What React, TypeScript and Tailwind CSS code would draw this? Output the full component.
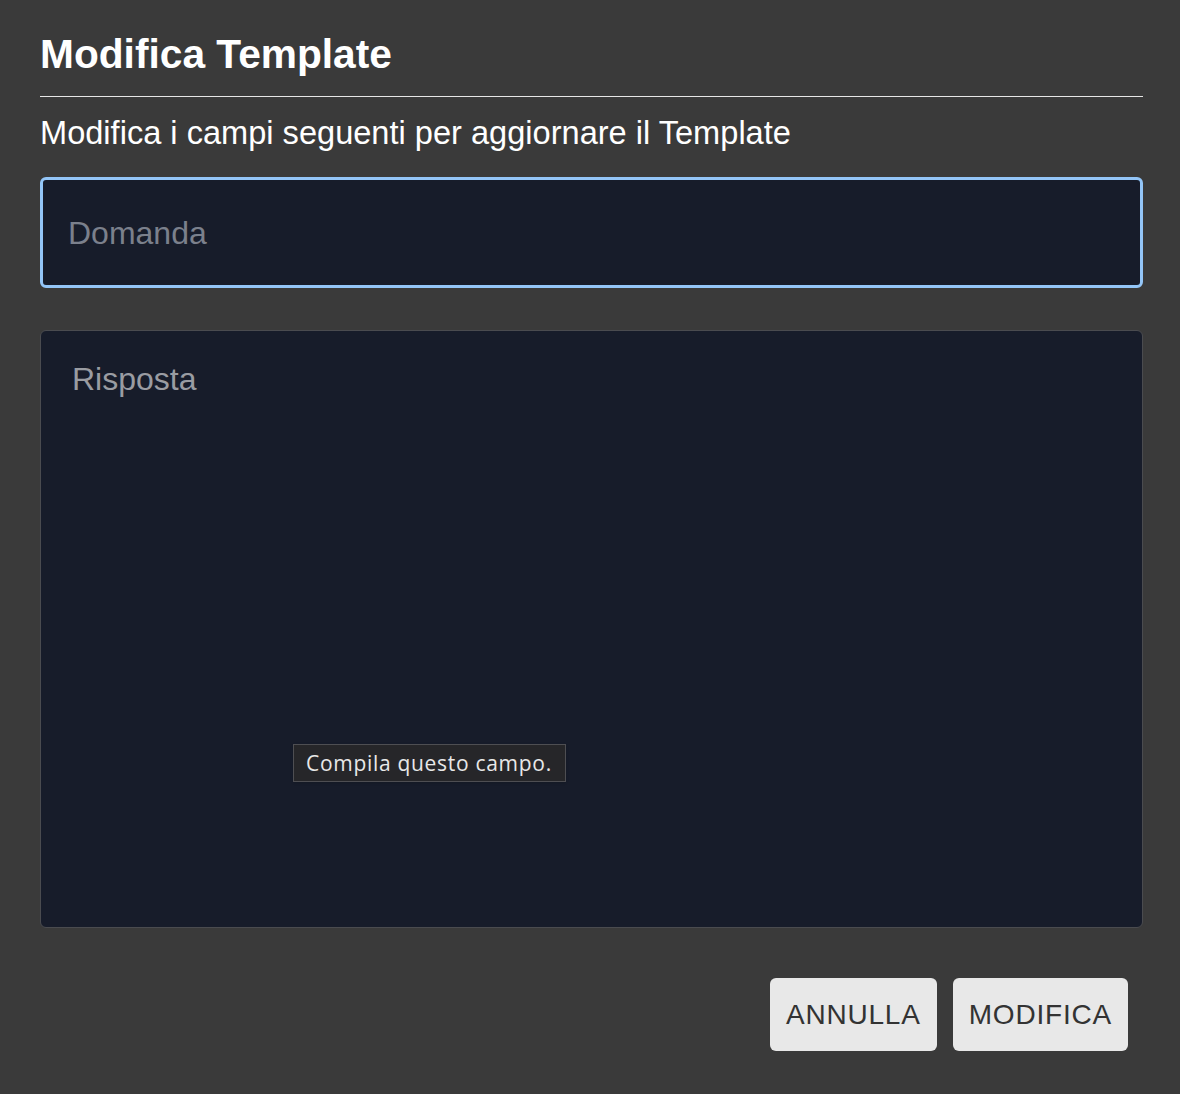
export default function App() {
  const font = { fontFamily: '"Liberation Sans", Arial, sans-serif' };
  return (
    <div className="min-h-[1094px] w-full bg-[#3a3a3a] pl-10 pr-[37px] pt-[30px]" style={font}>
      <h1 className="text-[40.7px] font-bold leading-[48px] text-white">Modifica Template</h1>
      <div className="mt-[18px] h-px w-full bg-[#e6e6e6]" />
      <p className="mt-[16px] text-[32.6px] leading-[40px] text-white">
        Modifica i campi seguenti per aggiornare il Template
      </p>
      <div className="mt-[24px] flex h-[111px] items-center rounded-[6px] border-[3px] border-[#93c5f7] bg-[#171c2a] pl-[25px]">
        <span className="text-[32px] text-[#7b808c]">Domanda</span>
      </div>
      <div className="relative mt-[42px] h-[598px] rounded-[6px] border border-[#4a4b4f] bg-[#171c2a] pl-[31px] pt-[28px]">
        <div className="text-[32px] leading-[40px] text-[#9a9ca2]">Risposta</div>
        <div
          className="absolute left-[252px] top-[413px] border border-[#4e4e52] bg-[#262629] py-[5px] pl-3 pr-[13px] text-[21px] leading-[26px] tracking-[0.7px] text-[#e8e8e8] shadow"
          style={{ fontFamily: '"Open Sans", Inter, sans-serif' }}
        >
          Compila questo campo.
        </div>
      </div>
      <div className="mt-[50px] flex justify-end gap-4 pr-[15px]">
        <button className="h-[73px] rounded-[6px] bg-[#e8e8e8] px-4 text-[28px] tracking-[0.8px] text-[#333]">ANNULLA</button>
        <button className="h-[73px] rounded-[6px] bg-[#e8e8e8] px-4 text-[28px] tracking-[0.8px] text-[#333]">MODIFICA</button>
      </div>
    </div>
  );
}
